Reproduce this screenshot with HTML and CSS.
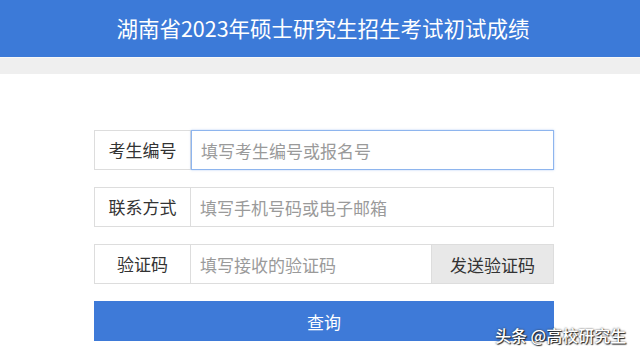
FILE: index.html
```html
<!DOCTYPE html>
<html lang="zh-CN">
<head>
  <meta charset="UTF-8" />
  <meta name="viewport" content="width=device-width, initial-scale=1.0">
  <title>成绩查询</title>
  <link rel="stylesheet" href="styles.css">
</head>
<body>
  <div class="header">湖南省2023年硕士研究生招生考试初试成绩</div>
  <div class="band"></div>

  <form class="query-form">
    <div class="row">
      <label class="label">考生编号</label>
      <input type="text" class="field active" placeholder="填写考生编号或报名号" />
    </div>
    <div class="row">
      <label class="label">联系方式</label>
      <input type="text" class="field" placeholder="填写手机号码或电子邮箱" />
    </div>
    <div class="row">
      <label class="label">验证码</label>
      <input type="text" class="field" placeholder="填写接收的验证码" />
      <button type="button" class="send">发送验证码</button>
    </div>
    <button type="submit" class="submit">查询</button>
  </form>

  <!-- watermark over the bottom right corner -->
  <div class="mark">头条 @高校研究生</div>
</body>
</html>
```

FILE: styles.css
```css
body {
  margin: 0;
  padding: 0;
  background-color: #ffffff;
  font-family: "Noto Sans CJK SC", "Noto Sans", sans-serif;
  color: #333333;
  position: relative;
  height: 354px;
  overflow: hidden;
}

.header {
  height: 57px;
  background-color: #3c7ad8;
  color: #ffffff;
  font-size: 21.5px;
  line-height: 55px;
  text-align: center;
  padding-left: 6px;
}

.band {
  height: 16px;
  background-color: #efefef;
  border-top: 1px solid #f8f8f8;
}

.query-form {
  width: 460px;
  margin: 56px 0 0 94px;
  display: flex;
  flex-direction: column;
  gap: 17px;
}

.row {
  display: flex;
  height: 40px;
}

.label {
  width: 97px;
  flex-shrink: 0;
  box-sizing: border-box;
  border: 1px solid #dddddd;
  font-size: 17px;
  line-height: 38px;
  text-align: center;
  color: #333333;
}

.field {
  flex: 1;
  min-width: 0;
  box-sizing: border-box;
  border: 1px solid #dddddd;
  border-left: none;
  padding: 0 9px;
  font-family: inherit;
  font-size: 17px;
  color: #333333;
  outline: none;
}

.field::placeholder {
  color: #9a9a9a;
}

.field.active {
  border: 1px solid #8eb5ee;
  box-shadow: 0 0 2px rgba(110, 160, 235, 0.5);
}

.send {
  width: 122px;
  flex-shrink: 0;
  box-sizing: border-box;
  border: 1px solid #dddddd;
  border-left: none;
  background-color: #e8e8e8;
  font-family: inherit;
  font-size: 17px;
  color: #333333;
  padding: 0;
}

.submit {
  height: 40px;
  border: none;
  background-color: #3e7ad8;
  color: #ffffff;
  font-family: inherit;
  font-size: 17px;
  padding: 0;
}

.mark {
  position: absolute;
  left: 495px;
  top: 323px;
  font-size: 16px;
  font-weight: 500;
  color: #ffffff;
  text-shadow: 1px 1px 1px #222222, 0 0 2px #333333;
}
```
